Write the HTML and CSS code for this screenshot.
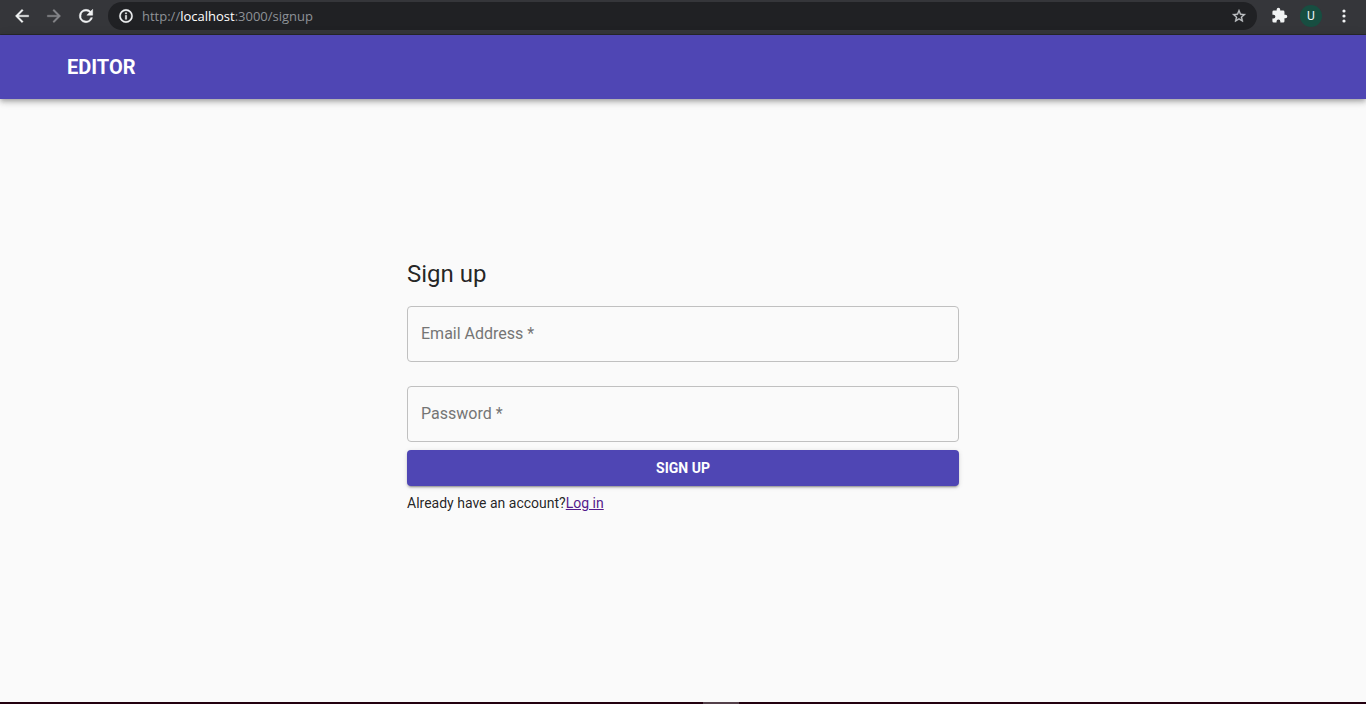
FILE: index.html
```html
<!DOCTYPE html>
<html lang="en">
<head>
    <meta charset="UTF-8">
    <meta name="viewport" content="width=device-width, initial-scale=1.0">
    <title>Editor</title>
    <link rel="stylesheet" href="styles.css">
</head>
<body>
    <!-- Browser toolbar -->
    <div class="browser">
        <button type="button" class="nav-btn" aria-label="Back">
            <svg viewBox="0 0 24 24" width="20" height="20"><path d="M20 11H7.83l5.59-5.59L12 4l-8 8 8 8 1.41-1.41L7.83 13H20z" stroke="currentColor" stroke-width=".4"/></svg>
        </button>
        <button type="button" class="nav-btn" aria-label="Forward" disabled>
            <svg viewBox="0 0 24 24" width="20" height="20"><path d="M4 11h12.17l-5.59-5.59L12 4l8 8-8 8-1.41-1.41L16.17 13H4z" stroke="currentColor" stroke-width=".4"/></svg>
        </button>
        <button type="button" class="nav-btn" aria-label="Reload">
            <svg viewBox="0 0 24 24" width="20" height="20"><path d="M17.65 6.35A7.95 7.95 0 0 0 12 4a8 8 0 1 0 7.73 10h-2.08A6 6 0 1 1 12 6c1.66 0 3.14.69 4.22 1.78L13 11h7V4z" stroke="currentColor" stroke-width=".6"/></svg>
        </button>
        <div class="address-bar">
            <svg viewBox="0 0 24 24" width="16" height="16"><path d="M11 17h2v-6h-2zm0-8h2V7h-2zm1-7a10 10 0 1 0 0 20 10 10 0 0 0 0-20zm0 18a8 8 0 1 1 0-16 8 8 0 0 1 0 16z" stroke="currentColor" stroke-width=".6"/></svg>
            <div class="url" role="textbox" contenteditable="true" spellcheck="false" aria-label="Address">http://<span class="url-host">localhost</span>:3000/signup</div>
            <button type="button" class="star-btn" aria-label="Bookmark this page">
                <svg viewBox="0 0 24 24" width="16" height="16"><path d="M22 9.24l-7.19-.62L12 2 9.19 8.63 2 9.24l5.46 4.73L5.82 21 12 17.27 18.18 21l-1.63-7.03zM12 15.4l-3.76 2.27 1-4.28-3.32-2.88 4.38-.38L12 6.1l1.71 4.04 4.38.38-3.32 2.88 1 4.28z" stroke="currentColor" stroke-width=".5"/></svg>
            </button>
        </div>
        <button type="button" class="ext-btn" aria-label="Extensions">
            <svg viewBox="0 0 24 24" width="17" height="17"><path d="M20.5 11H19V7a2 2 0 0 0-2-2h-4V3.500a2.500 2.500 0 0 0-5 0V5H4a2 2 0 0 0-2 2v3.800h1.500a2.700 2.700 0 0 1 0 5.400H2V20a2 2 0 0 0 2 2h3.800v-1.500a2.700 2.700 0 0 1 5.400 0V22H17a2 2 0 0 0 2-2v-4h1.500a2.500 2.500 0 0 0 0-5z"/></svg>
        </button>
        <button type="button" class="avatar" aria-label="Profile">U</button>
        <button type="button" class="menu-btn" aria-label="Menu">
            <svg viewBox="0 0 4 16" width="4" height="16"><circle cx="2" cy="3" r="1.600"/><circle cx="2" cy="8" r="1.600"/><circle cx="2" cy="13" r="1.600"/></svg>
        </button>
    </div>

    <header class="app-bar">
        <h1 class="brand">EDITOR</h1>
    </header>

    <main class="page">
        <form class="signup">
            <h2 class="title">Sign up</h2>
            <div class="field">
                <input type="email" id="email" required>
                <label for="email">Email Address *</label>
            </div>
            <div class="field">
                <input type="password" id="password" required>
                <label for="password">Password *</label>
            </div>
            <button type="submit" class="submit">SIGN UP</button>
            <p class="login">Already have an account?<a href="#login">Log in</a></p>
        </form>
    </main>

    <footer class="taskbar">
        <span class="taskbar-app"></span>
    </footer>
</body>
</html>
```
FILE: styles.css
```css
* {
    box-sizing: border-box;
}
body {
    margin: 0;
    min-height: 100vh;
    display: flex;
    flex-direction: column;
    background: #fafafa;
    color: rgba(0, 0, 0, 0.87);
    font-family: Roboto, "Liberation Sans", sans-serif;
}
button {
    border: 0;
    padding: 0;
    background: none;
    color: inherit;
    font-family: inherit;
}
svg {
    display: block;
    flex: none;
    fill: currentColor;
}

/* browser toolbar */
.browser {
    display: flex;
    align-items: center;
    height: 35px;
    padding: 0 20px 3px 12px;
    background: #35363a;
    border-bottom: 1px solid #28292b;
    color: #f1f3f4;
}
.nav-btn {
    margin-right: 12px;
}
.nav-btn:disabled {
    color: #85868a;
}
.address-bar {
    flex: 1;
    display: flex;
    align-items: center;
    gap: 8px;
    height: 28px;
    padding: 0 10px;
    border-radius: 14px;
    background: #202124;
}
.url {
    flex: 1;
    color: #8e9297;
    font: 13px/20px "Open Sans", "Noto Sans", sans-serif;
    outline: none;
}
.url-host {
    color: #fff;
}
.star-btn {
    color: #c4c7ca;
}
.ext-btn {
    margin-left: 14px;
}
.avatar {
    width: 22px;
    height: 22px;
    margin: 0 20px 0 12px;
    border-radius: 50%;
    background: #174e41;
    font-size: 12px;
}

/* app bar */
.app-bar {
    display: flex;
    align-items: center;
    height: 64px;
    padding: 0 67px;
    background: #4f46b4;
    color: #fff;
    box-shadow: 0 2px 4px -1px rgba(0, 0, 0, 0.2), 0 4px 5px rgba(0, 0, 0, 0.14), 0 1px 10px rgba(0, 0, 0, 0.12);
}
.brand {
    margin: 0;
    font-size: 20px;
    font-weight: 700;
    line-height: 32px;
}

/* sign up form */
.page {
    flex: 1;
    display: flex;
    align-items: center;
    justify-content: center;
    padding: 0 24px 32px;
}
.signup {
    width: 100%;
    max-width: 552px;
}
.title {
    margin: 0 0 16px;
    font-size: 24px;
    font-weight: 400;
    line-height: 32px;
}
.field {
    position: relative;
    margin-bottom: 24px;
}
.field input {
    display: block;
    width: 100%;
    height: 56px;
    padding: 0 14px;
    border: 1px solid #c0c0c0;
    border-radius: 4px;
    background: transparent;
    font: 16px Roboto, sans-serif;
    box-shadow: none;
}
.field label {
    position: absolute;
    left: 14px;
    top: 16px;
    color: #757575;
    font-size: 16px;
    line-height: 24px;
    pointer-events: none;
}
.field input:focus + label,
.field input:valid + label {
    top: -12px;
    background: #fafafa;
    font-size: 12px;
}
.field:has(+ .submit) {
    margin-bottom: 8px;
}
.submit {
    display: block;
    width: 100%;
    height: 36px;
    border-radius: 4px;
    background: #4f46b4;
    color: #fff;
    font-size: 14px;
    font-weight: 700;
    box-shadow: 0 3px 1px -2px rgba(0, 0, 0, 0.2), 0 2px 2px rgba(0, 0, 0, 0.14), 0 1px 5px rgba(0, 0, 0, 0.12);
}
.login {
    margin: 8px 0 0;
    font-size: 14px;
    line-height: 18px;
}
.login a {
    color: #551a8b;
}

/* top edge of the taskbar */
.taskbar {
    display: flex;
    justify-content: center;
    height: 2px;
    padding-left: 76px;
    background: #23000f;
}
.taskbar-app {
    width: 36px;
    background: #54404a;
}
```
